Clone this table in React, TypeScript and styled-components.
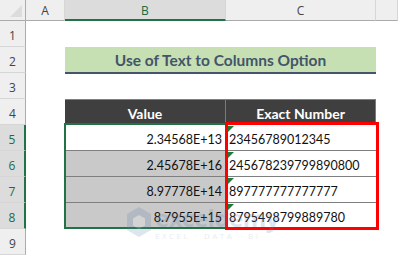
import React from "react";
import styled, { createGlobalStyle } from "styled-components";

const Global = createGlobalStyle`
  html, body { margin: 0; padding: 0; background: #fff; }
  body { width: 398px; height: 255px; overflow: hidden; }
`;

const Sheet = styled.div`
  position: relative;
  display: grid;
  grid-template-columns: 26px 39px 161px 150px 22px;
  grid-template-rows: 21px repeat(9, 26px);
  width: 398px;
  height: 255px;
  overflow: hidden;
  background: #fff;
  font-family: Lato, "Liberation Sans", sans-serif;
`;

const Corner = styled.div`
  grid-row: 1;
  grid-column: 1;
  background: #efefef;
  border-right: 1px solid #ababab;
  border-bottom: 1px solid #ababab;
  box-sizing: border-box;
  position: relative;
  &::after {
    content: "";
    position: absolute;
    right: 3px;
    bottom: 3px;
    width: 0;
    height: 0;
    border-left: 12px solid transparent;
    border-bottom: 12px solid #dcdcdc;
  }
`;

const ColHead = styled.div<{ $col: number; $sel?: boolean }>`
  grid-row: 1;
  grid-column: ${(p) => p.$col};
  display: flex;
  align-items: center;
  justify-content: center;
  box-sizing: border-box;
  background: ${(p) => (p.$sel ? "#dcdcdc" : "#efefef")};
  color: ${(p) => (p.$sel ? "#1e6b40" : "#444")};
  border-right: 1px solid #d6d6d6;
  border-bottom: ${(p) => (p.$sel ? "2px solid #217346" : "1px solid #ababab")};
  font-family: "Open Sans", "Liberation Sans", sans-serif;
  font-size: 12px;
  padding-top: 1px;
`;

const RowHead = styled.div<{ $row: number; $sel?: boolean }>`
  grid-row: ${(p) => p.$row};
  grid-column: 1;
  display: flex;
  align-items: center;
  justify-content: center;
  box-sizing: border-box;
  background: ${(p) => (p.$sel ? "#dcdcdc" : "#efefef")};
  color: ${(p) => (p.$sel ? "#1e6b40" : "#444")};
  border-bottom: 1px solid #d6d6d6;
  border-right: ${(p) => (p.$sel ? "2px solid #217346" : "1px solid #ababab")};
  font-family: "Open Sans", "Liberation Sans", sans-serif;
  font-size: 12px;
  padding-top: 4px;
`;

const Title = styled.div`
  grid-row: 3;
  grid-column: 3 / span 2;
  display: flex;
  align-items: center;
  justify-content: center;
  background: #c6e0b4;
  border-bottom: 2px solid #44546a;
  box-sizing: border-box;
  margin-bottom: -1px;
  color: #44546a;
  font-weight: 700;
  font-size: 15.5px;
  padding-top: 1px;
`;

const HeadCell = styled.div<{ $col: number }>`
  grid-row: 5;
  grid-column: ${(p) => p.$col};
  display: flex;
  align-items: center;
  justify-content: center;
  background: #3f3f3f;
  color: #fff;
  font-weight: 700;
  font-size: 14px;
  box-sizing: border-box;
  border-top: 1px solid #808080;
  border-right: 1px solid #7a7a7a;
  padding-top: 1px;
`;

const ValueCell = styled.div<{ $row: number; $shade?: boolean }>`
  grid-row: ${(p) => p.$row};
  grid-column: 3;
  display: flex;
  align-items: center;
  justify-content: flex-end;
  padding: 3px 4px 0 0;
  box-sizing: border-box;
  background: ${(p) => (p.$shade ? "#c9c9c9" : "#fff")};
  border-bottom: 1px solid #7f7f7f;
  color: #111;
  font-size: 12.5px;
`;

const TextCell = styled.div<{ $row: number }>`
  grid-row: ${(p) => p.$row};
  grid-column: 4;
  position: relative;
  display: flex;
  align-items: center;
  padding: 3px 0 0 3px;
  box-sizing: border-box;
  background: #fff;
  border-bottom: 1px solid #7f7f7f;
  color: #111;
  font-size: 12.5px;
  &::before {
    content: "";
    position: absolute;
    left: 2px;
    top: 1px;
    width: 0;
    height: 0;
    border-top: 6px solid #1f7a3a;
    border-right: 6px solid transparent;
  }
`;

const Selection = styled.div`
  grid-row: 6 / span 4;
  grid-column: 3;
  margin: -2px -1px 0 -1px;
  border: 2px solid #217346;
  box-sizing: border-box;
  pointer-events: none;
  z-index: 2;
`;

const RedBox = styled.div`
  grid-row: 6 / span 4;
  grid-column: 4;
  margin: -3px -3px -1px -1px;
  border: 3px solid #ff0000;
  box-sizing: border-box;
  pointer-events: none;
  z-index: 3;
`;

const Watermark = styled.div`
  position: absolute;
  left: 126px;
  top: 206px;
  display: flex;
  align-items: flex-start;
  gap: 3px;
  opacity: 0.2;
  pointer-events: none;
  z-index: 4;
  color: #5b7fb0;
`;

const WmText = styled.div`
  display: flex;
  flex-direction: column;
  line-height: 1;
`;

const WmBig = styled.span`
  font-family: "Open Sans", sans-serif;
  font-weight: 700;
  font-size: 24px;
  letter-spacing: -0.5px;
`;

const WmSmall = styled.span`
  font-family: "Open Sans", sans-serif;
  font-size: 8px;
  letter-spacing: 2.5px;
  margin-top: 2px;
  color: #8a9bb3;
`;

const rows = [
  { b: "2.34568E+13", c: "23456789012345" },
  { b: "2.45678E+16", c: "245678239799890800" },
  { b: "8.97778E+14", c: "897777777777777" },
  { b: "8.7955E+15", c: "8795498799889780" },
];

export default function App() {
  return (
    <>
      <Global />
      <Sheet>
        <Corner />
        <ColHead $col={2}>A</ColHead>
        <ColHead $col={3} $sel>B</ColHead>
        <ColHead $col={4}>C</ColHead>
        <ColHead $col={5} />
        {[1, 2, 3, 4, 5, 6, 7, 8, 9].map((n) => (
          <RowHead key={n} $row={n + 1} $sel={n >= 5 && n <= 8}>
            {n}
          </RowHead>
        ))}
        <Title>Use of Text to Columns Option</Title>
        <HeadCell $col={3}>Value</HeadCell>
        <HeadCell $col={4}>Exact Number</HeadCell>
        {rows.map((r, i) => (
          <React.Fragment key={i}>
            <ValueCell $row={i + 6} $shade={i > 0}>
              {r.b}
            </ValueCell>
            <TextCell $row={i + 6}>{r.c}</TextCell>
          </React.Fragment>
        ))}
        <Selection />
        <RedBox />
        <Watermark>
          <svg width="26" height="32" viewBox="0 0 26 32">
            <polygon points="13,1 25,8 25,24 13,31 1,24 1,8" fill="#5b7fb0" />
            <polygon points="13,9 19,12.5 19,19.5 13,23 7,19.5 7,12.5" fill="#fff" />
          </svg>
          <WmText>
            <WmBig>exceldemy</WmBig>
            <WmSmall>EXCEL · DATA · BI</WmSmall>
          </WmText>
        </Watermark>
      </Sheet>
    </>
  );
}
